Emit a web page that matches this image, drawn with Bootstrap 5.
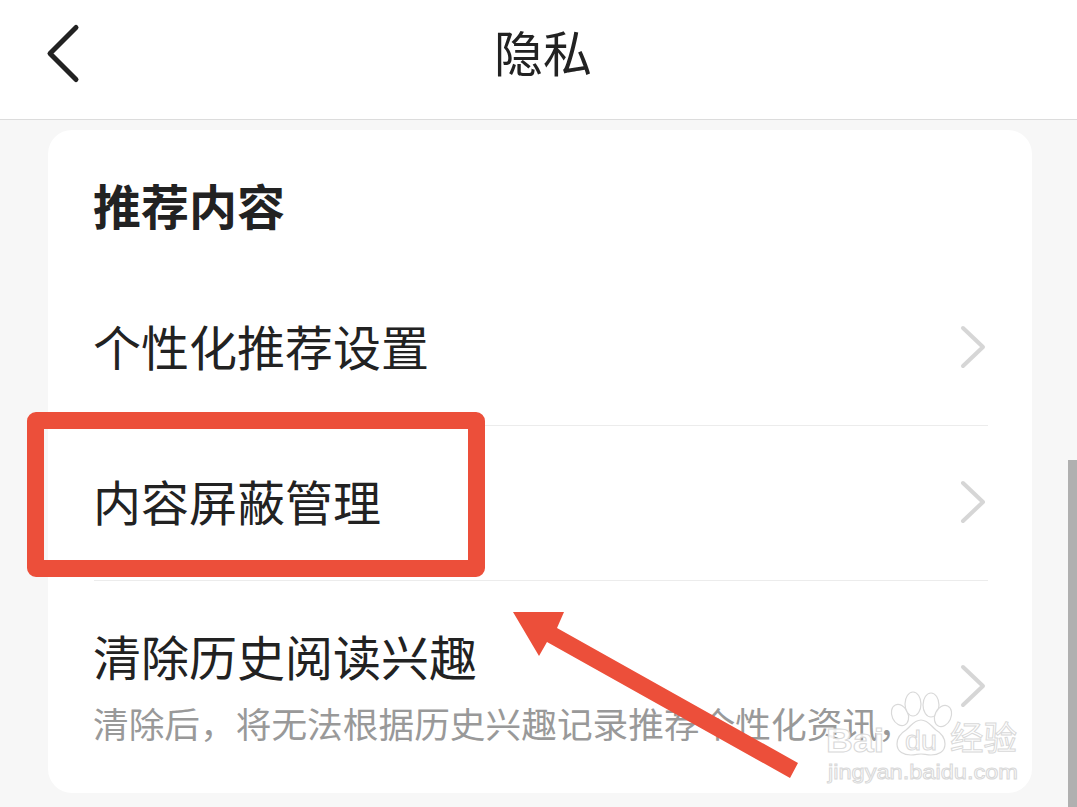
<!doctype html>
<html lang="zh-CN">
<head>
<meta charset="utf-8">
<title>隐私</title>
<link href="https://cdn.jsdelivr.net/npm/bootstrap@5.3.0/dist/css/bootstrap.min.css" rel="stylesheet">
<style>
html,body{height:100%;overflow:hidden}
body{background:#f7f7f7;color:#222;font-family:"Noto Sans CJK SC","Liberation Sans",sans-serif;position:relative;width:1077px;height:807px}
.top-bar{height:120px;background:#fff;border-bottom:1px solid #dcdcdc;padding-left:40px}
.back-ico{width:40px;height:62px;margin-top:-12px;display:block;flex:none}
.top-title{font-size:49px;line-height:1;margin-left:414px;margin-top:-18px;font-weight:400;color:#222}
.panel-card{width:984px;height:663px;margin:10px 0 0 48px;background:#fff;border:0;border-radius:24px;padding:0 44px 0 46px}
.panel-head{height:141px;font-size:48px;font-weight:700;line-height:1;padding-top:7px;margin:0 0 0 -1px}
.set-row{height:155px;border-bottom:1px solid #ececec;font-size:48px;line-height:1}
.row-text{margin:0 0 7px -1px}
.set-row.tall{height:212px;border-bottom:0;align-items:flex-start!important;padding-top:50px}
.tall .row-text{margin-bottom:0}
.row-sub{font-size:35.7px;line-height:1;color:#999;margin-top:26px;white-space:nowrap}
.row-chev{width:28px;height:44px;flex:none;display:block;margin-bottom:2px}
.tall .row-chev{margin-top:33px;margin-bottom:0}
.scroll-thumb{position:absolute;right:0;top:460px;width:9px;height:347px;background:#b0b0b0}
.red-frame{position:absolute;left:27px;top:412px;width:458px;height:165px;border:17px solid #ec4f3a;border-radius:9px}
.mark-layer{position:absolute;left:0;top:0;width:1077px;height:807px;pointer-events:none}
.wm text{fill:#fff;fill-opacity:.88;stroke:#d9d9d9;stroke-width:1;font-family:"Liberation Sans",sans-serif}
.wm .cjk{font-family:"Noto Sans CJK SC",sans-serif}
</style>
</head>
<body>
<header class="top-bar d-flex align-items-center">
  <svg class="back-ico" viewBox="0 0 40 62" fill="none" stroke="#222" stroke-width="5" stroke-linecap="round" stroke-linejoin="round"><path d="M36 4.500 10 30.500 36 56.500"/></svg>
  <h1 class="top-title mb-0">隐私</h1>
</header>
<main class="card panel-card">
  <h2 class="panel-head d-flex align-items-center">推荐内容</h2>
  <div class="set-row d-flex align-items-center justify-content-between">
    <span class="row-text">个性化推荐设置</span>
    <svg class="row-chev" viewBox="0 0 28 44" fill="none" stroke="#d6d6d6" stroke-width="4" stroke-linecap="round" stroke-linejoin="round"><path d="M3 3 23 22 3 41"/></svg>
  </div>
  <div class="set-row d-flex align-items-center justify-content-between">
    <span class="row-text">内容屏蔽管理</span>
    <svg class="row-chev" viewBox="0 0 28 44" fill="none" stroke="#d6d6d6" stroke-width="4" stroke-linecap="round" stroke-linejoin="round"><path d="M3 3 23 22 3 41"/></svg>
  </div>
  <div class="set-row tall d-flex justify-content-between">
    <div class="row-text">
      <div>清除历史阅读兴趣</div>
      <div class="row-sub">清除后，将无法根据历史兴趣记录推荐个性化资讯，</div>
    </div>
    <svg class="row-chev" viewBox="0 0 28 44" fill="none" stroke="#d6d6d6" stroke-width="4" stroke-linecap="round" stroke-linejoin="round"><path d="M3 3 23 22 3 41"/></svg>
  </div>
</main>
<div class="scroll-thumb"></div>
<div class="red-frame"></div>
<svg class="mark-layer" viewBox="0 0 1077 807">
  <polygon fill="#ec4f3a" points="513,612 564,612 557,628 798,763 790,778 547,642 539,656"/>
  <g class="wm">
    <g fill="#fff" fill-opacity=".88" stroke="#d9d9d9" stroke-width="1.2">
      <ellipse cx="900" cy="715" rx="8" ry="11" transform="rotate(-25 900 715)"/>
      <ellipse cx="913" cy="704" rx="8" ry="12"/>
      <ellipse cx="931" cy="705" rx="8" ry="12"/>
      <ellipse cx="943" cy="716" rx="8" ry="11" transform="rotate(25 943 716)"/>
      <path d="M921 720c7 0 10 6 15 10 5 3 9 8 9 14 0 8-7 11-14 11-4 0-7-1-10-1s-6 1-10 1c-7 0-14-3-14-11 0-6 4-11 9-14 5-4 8-10 15-10z"/>
    </g>
    <text x="826" y="752" font-size="33" font-weight="700" textLength="58" lengthAdjust="spacingAndGlyphs">Bai</text>
    <text x="905" y="750" font-size="27" textLength="32" lengthAdjust="spacingAndGlyphs">du</text>
    <text class="cjk" x="950" y="750" font-size="33" textLength="67" lengthAdjust="spacingAndGlyphs">经验</text>
    <text x="828" y="779" font-size="21" textLength="190" lengthAdjust="spacingAndGlyphs">jingyan.baidu.com</text>
  </g>
</svg>
<script src="https://cdn.jsdelivr.net/npm/bootstrap@5.3.0/dist/js/bootstrap.bundle.min.js"></script>
</body>
</html>
